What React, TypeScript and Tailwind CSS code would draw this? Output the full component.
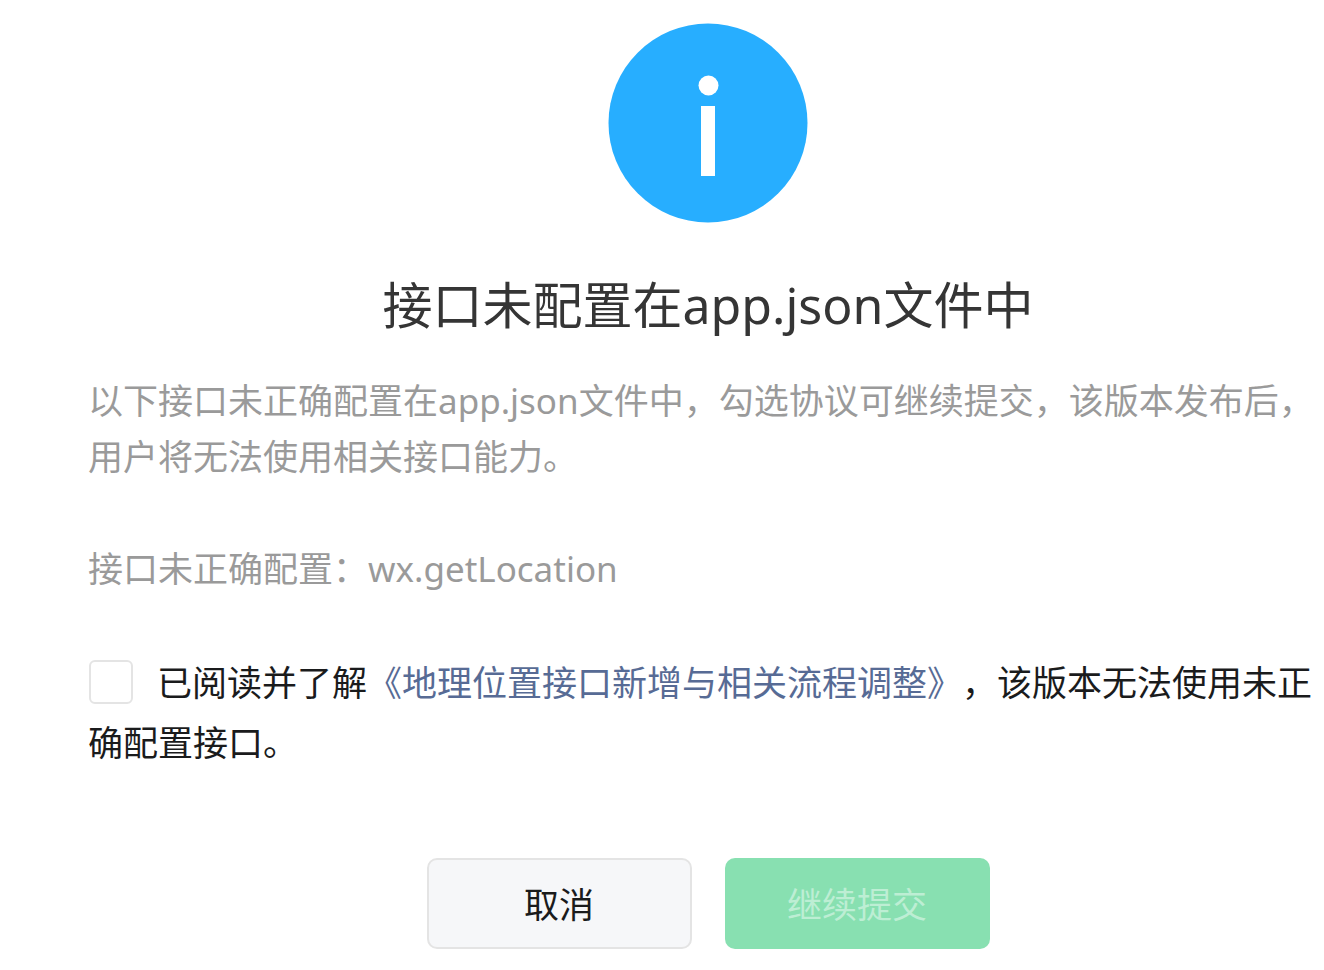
import { useState } from "react";

function InfoIcon() {
  return (
    <svg className="size-50" viewBox="0 0 200 200" aria-hidden="true">
      <circle cx="100" cy="100" r="99.5" fill="#27aeff" />
      <circle cx="100.5" cy="62.5" r="10" fill="#fff" />
      <rect x="93" y="83" width="14" height="70" fill="#fff" />
    </svg>
  );
}

export default function App() {
  const [agreed, setAgreed] = useState(false);

  return (
    <main className="bg-white pt-[23px] pb-5 pl-[88px] font-['Noto_Sans','Noto_Sans_CJK_SC',sans-serif] text-[35px] text-[#9a9a9a] [text-spacing-trim:space-all]">
      <div className="flex flex-col items-center pl-1">
        <InfoIcon />
        <h1 className="mt-[46px] text-[50px] leading-[72px] text-[#353535]">接口未配置在app.json文件中</h1>
      </div>

      <div className="mt-8 leading-14">
        <p>以下接口未正确配置在app.json文件中，勾选协议可继续提交，该版本发布后，用户将无法使用相关接口能力。</p>
        <p className="mt-14">接口未正确配置：wx.getLocation</p>
      </div>

      <label className="mt-14 block leading-[60px] text-[#1a1b1c]">
        <input
          type="checkbox"
          checked={agreed}
          onChange={(e) => setAgreed(e.target.checked)}
          className="mr-6 ml-px size-11 appearance-none rounded-md border-2 border-[#e4e4e4] bg-white align-[-8px] checked:bg-[#07c160]"
        />
        已阅读并了解
        <a href="#notice" className="text-[#576b95]">《地理位置接口新增与相关流程调整》</a>
        ，该版本无法使用未正确配置接口。
      </label>

      <div className="mt-[85px] flex justify-center gap-[33px] pl-1">
        <button
          type="button"
          className="h-[91px] w-[265px] rounded-[10px] border-2 border-[#e4e4e4] bg-[#f6f7f9] pt-1 text-[#1a1b1c]"
        >
          取消
        </button>
        <button
          type="button"
          disabled={!agreed}
          className="h-[91px] w-[265px] rounded-[10px] bg-[#88e0b1] pt-1 text-[#bdeed4]"
        >
          继续提交
        </button>
      </div>
    </main>
  );
}
